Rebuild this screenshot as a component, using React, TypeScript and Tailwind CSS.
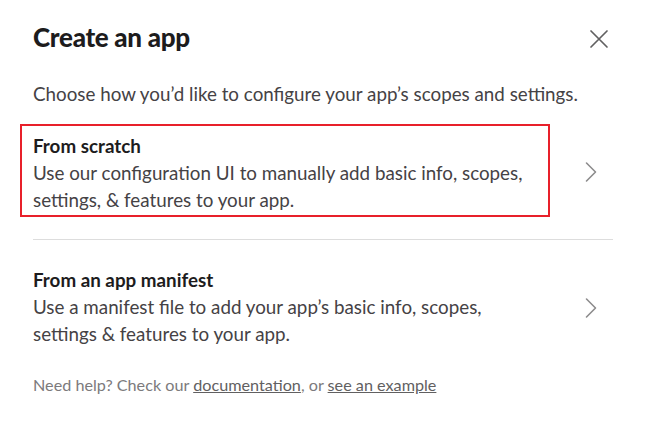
import React from "react";

function Chevron() {
  return (
    <svg width="14" height="22" viewBox="0 0 14 22" fill="none" className="shrink-0">
      <path d="M2.5 2 L11.5 11 L2.5 20" stroke="#8d8c8d" strokeWidth="1.6" strokeLinecap="round" strokeLinejoin="round" />
    </svg>
  );
}

export default function App() {
  return (
    <div className="w-[647px] h-[429px] bg-white pl-[33px] pr-[34px] pt-[18px] font-['Lato','Noto_Sans',sans-serif] text-[#1d1c1d]">
      <div className="flex items-center justify-between h-[38px]">
        <h1 className="text-[26px] font-black tracking-[-0.3px] leading-[38px]">Create an app</h1>
        <button className="w-[24px] h-[24px] flex items-center justify-center mr-[2px] mt-[4px]">
          <svg width="20" height="20" viewBox="0 0 20 20" fill="none">
            <path d="M2 2 L18 18 M18 2 L2 18" stroke="#616061" strokeWidth="1.7" strokeLinecap="round" />
          </svg>
        </button>
      </div>
      <p className="mt-[24px] text-[18.8px] leading-[27px] text-[#454245]">
        Choose how you’d like to configure your app’s scopes and settings.
      </p>
      <div className="mt-[17px] flex items-center justify-between pb-[22px] border-b border-[#dddddd]">
        <div className="-ml-[13px] w-[530px] border-2 border-[#e8202a] pl-[11px] pt-[6px] pb-[2px]">
          <div className="text-[18.8px] font-bold leading-[27px]">From scratch</div>
          <div className="text-[18.8px] leading-[27px] text-[#454245]">
            Use our configuration UI to manually add basic info, scopes, settings, &amp; features to your app.
          </div>
        </div>
        <div className="mr-[15px] mt-[2px]">
          <Chevron />
        </div>
      </div>
      <div className="mt-[26px] flex items-center justify-between">
        <div className="w-[505px]">
          <div className="text-[18.8px] font-bold leading-[27px]">From an app manifest</div>
          <div className="text-[18.8px] leading-[27px] text-[#454245]">
            Use a manifest file to add your app’s basic info, scopes, settings &amp; features to your app.
          </div>
        </div>
        <div className="mr-[15px] mt-[2px]">
          <Chevron />
        </div>
      </div>
      <p className="mt-[26px] text-[16.2px] leading-[24px] text-[#7c7a7c]">
        Need help? Check our <a className="underline text-[#616061]">documentation</a>, or{" "}
        <a className="underline text-[#616061]">see an example</a>
      </p>
    </div>
  );
}
